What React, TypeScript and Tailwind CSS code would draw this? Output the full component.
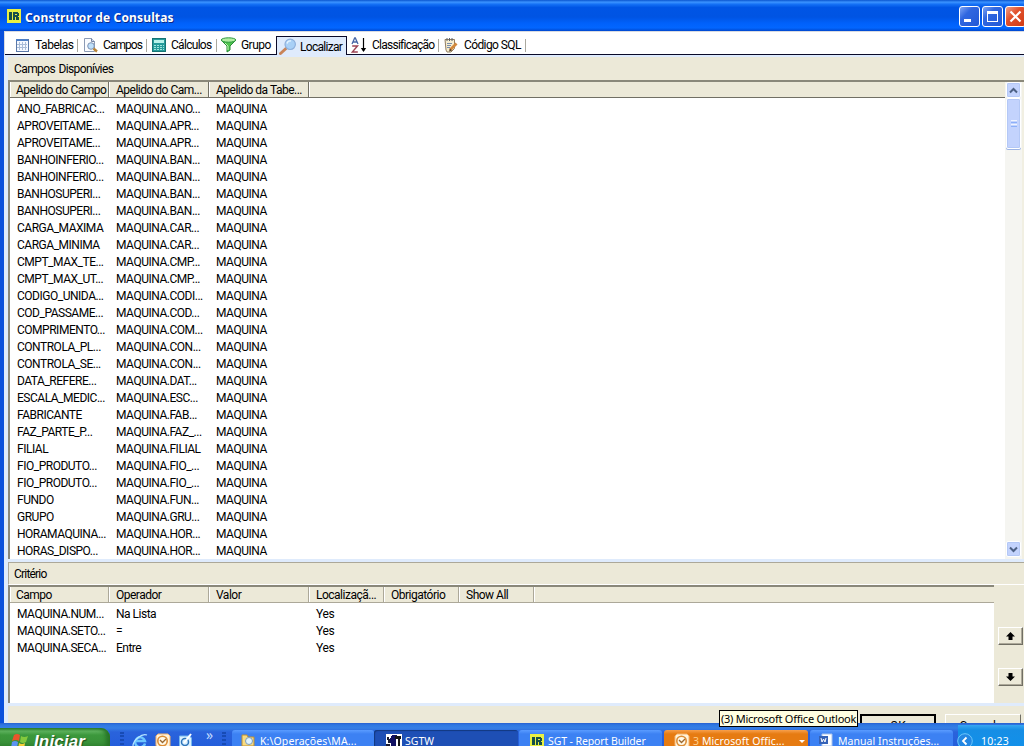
import React from "react";

type Column = { label: string; width: string };

type ToolbarItem = {
  label: string;
  icon: React.ReactNode;
  width: string;
  iconBox: string;
  text: string;
  active?: boolean;
  divider?: boolean;
};

const fields: [string, string][] = [
  ["ANO_FABRICAC...", "MAQUINA.ANO..."],
  ["APROVEITAME...", "MAQUINA.APR..."],
  ["APROVEITAME...", "MAQUINA.APR..."],
  ["BANHOINFERIO...", "MAQUINA.BAN..."],
  ["BANHOINFERIO...", "MAQUINA.BAN..."],
  ["BANHOSUPERI...", "MAQUINA.BAN..."],
  ["BANHOSUPERI...", "MAQUINA.BAN..."],
  ["CARGA_MAXIMA", "MAQUINA.CAR..."],
  ["CARGA_MINIMA", "MAQUINA.CAR..."],
  ["CMPT_MAX_TE...", "MAQUINA.CMP..."],
  ["CMPT_MAX_UT...", "MAQUINA.CMP..."],
  ["CODIGO_UNIDA...", "MAQUINA.CODI..."],
  ["COD_PASSAME...", "MAQUINA.COD..."],
  ["COMPRIMENTO...", "MAQUINA.COM..."],
  ["CONTROLA_PL...", "MAQUINA.CON..."],
  ["CONTROLA_SE...", "MAQUINA.CON..."],
  ["DATA_REFERE...", "MAQUINA.DAT..."],
  ["ESCALA_MEDIC...", "MAQUINA.ESC..."],
  ["FABRICANTE", "MAQUINA.FAB..."],
  ["FAZ_PARTE_P...", "MAQUINA.FAZ_..."],
  ["FILIAL", "MAQUINA.FILIAL"],
  ["FIO_PRODUTO...", "MAQUINA.FIO_..."],
  ["FIO_PRODUTO...", "MAQUINA.FIO_..."],
  ["FUNDO", "MAQUINA.FUN..."],
  ["GRUPO", "MAQUINA.GRU..."],
  ["HORAMAQUINA...", "MAQUINA.HOR..."],
  ["HORAS_DISPO...", "MAQUINA.HOR..."],
];

const criteria = [
  { campo: "MAQUINA.NUM...", operador: "Na Lista", localizacao: "Yes" },
  { campo: "MAQUINA.SETO...", operador: "=", localizacao: "Yes" },
  { campo: "MAQUINA.SECA...", operador: "Entre", localizacao: "Yes" },
];

const fieldColumns: Column[] = [
  { label: "Apelido do Campo", width: "w-[99px] pl-[6px]" },
  { label: "Apelido do Cam...", width: "w-[100px] pl-[7px]" },
  { label: "Apelido da Tabe...", width: "w-[100px] pl-[7px]" },
];

const criteriaColumns: Column[] = [
  { label: "Campo", width: "w-[99px] pl-[6px]" },
  { label: "Operador", width: "w-[100px] pl-[7px]" },
  { label: "Valor", width: "w-[100px] pl-[7px]" },
  { label: "Localizaçã...", width: "w-[75px] pl-[7px]" },
  { label: "Obrigatório", width: "w-[75px] pl-[7px]" },
  { label: "Show All", width: "w-[75px] pl-[7px]" },
];

const TableIcon = () => (
  <svg width="14" height="14" viewBox="0 0 14 14" shapeRendering="crispEdges">
    <rect x="1" y="1" width="12" height="12" fill="#f4f8ff" stroke="#5a78a8" />
    <rect x="1" y="1" width="12" height="2" fill="#4f7fc4" />
    <path d="M2 6.5h10M2 9.5h10M4.5 4v8M7.5 4v8M10.5 4v8" stroke="#a9bcd8" fill="none" />
  </svg>
);

const PageIcon = () => (
  <svg width="16" height="16" viewBox="0 0 16 16">
    <path d="M1.5 1.5h7l3 3v10h-10z" fill="#fafcff" stroke="#8c9bb5" />
    <path d="M8.5 1.5v3h3" fill="#cfdcf0" stroke="#7484a4" />
    <circle cx="8" cy="9" r="3.3" fill="#bfe0fa" stroke="#7d92b4" />
    <path d="M10.5 11.5l3.5 3" stroke="#b98538" strokeWidth="2.4" />
  </svg>
);

const CalcIcon = () => (
  <svg width="14" height="14" viewBox="0 0 14 14" shapeRendering="crispEdges">
    <rect x="0.5" y="0.5" width="13" height="13" fill="#259b9b" stroke="#167474" />
    <rect x="2" y="2" width="10" height="3" fill="#b8f2ea" />
    <path d="M2 7.5h10M2 9.5h10M2 11.5h10" stroke="#9fe6de" strokeDasharray="2 1" />
  </svg>
);

const FunnelIcon = () => (
  <svg width="17" height="16" viewBox="0 0 17 16">
    <path d="M1 3l6 6v6l3-2V9l6-6z" fill="#4ec54e" stroke="#278c35" />
    <ellipse cx="8.5" cy="3" rx="7.3" ry="2.2" fill="#b2efa2" stroke="#2c9640" />
    <path d="M5 6l3 3v4" stroke="#c4f5b5" fill="none" />
  </svg>
);

const LensIcon = () => (
  <svg width="18" height="18" viewBox="0 0 18 18">
    <path d="M1.5 15.5l5.5-5" stroke="#c98458" strokeWidth="3" strokeLinecap="round" />
    <circle cx="11.2" cy="6.3" r="5.2" fill="#a9d0f6" stroke="#8fb0dc" strokeWidth="1.2" />
    <path d="M8 5.5a3.5 3.5 0 0 1 4-2.5" stroke="#e6f5ff" strokeWidth="1.4" fill="none" />
  </svg>
);

const SortIcon = () => (
  <svg width="16" height="16" viewBox="0 0 16 16">
    <path d="M1 7l2.7-6h.6L7 7M2 5h4" fill="none" stroke="#4666a6" strokeWidth="1.3" />
    <path d="M1.2 9h5.3L1.3 15h5.5" fill="none" stroke="#9d4454" strokeWidth="1.4" />
    <path d="M12.5 1v13" stroke="#000" strokeWidth="1.2" />
    <path d="M9.8 11h5.4l-2.7 4z" fill="#000" />
  </svg>
);

const ScriptIcon = () => (
  <svg width="15" height="16" viewBox="0 0 15 16">
    <path d="M1 2.5h9.5v9L7 15H3l-1-2z" fill="#f6edcf" stroke="#927e62" />
    <path d="M3 1v3M5.5 1v3M8 1v3" stroke="#59606c" />
    <path d="M3 6.5h5M3 8.5h4M3 10.5h3" stroke="#788cad" />
    <path d="M6 13l6.5-6.5" stroke="#d2873b" strokeWidth="2.8" />
    <path d="M5 14.5l1-3 2 2z" fill="#50402b" />
  </svg>
);

const ReportIcon = () => (
  <svg width="14" height="14" viewBox="0 0 14 14" shapeRendering="crispEdges">
    <rect width="14" height="14" fill="#e9f043" />
    <path d="M2 3h3v8H2zM6 3h5v1h1v3h-1v1h1v3H9V8H8v3H6z" fill="#164f4a" />
    <path d="M8 5h2v1H8z" fill="#e9f043" />
  </svg>
);

const OutlookIcon = () => (
  <svg width="16" height="16" viewBox="0 0 16 16">
    <path d="M3 1h10l2 2v10l-3 2H2l-1-3V3z" fill="#fff3db" stroke="#f6b46d" />
    <circle cx="7.5" cy="8" r="4.7" fill="#fff9e8" stroke="#dc8c35" strokeWidth="1.6" />
    <path d="M5 7l2.5 2.5L11 6" stroke="#9b672f" strokeWidth="1.3" fill="none" />
  </svg>
);

const toolbar: ToolbarItem[] = [
  { label: "Tabelas", icon: <TableIcon />, width: "w-[72px]", iconBox: "w-[29px] pl-[9px]", text: "tracking-[-0.45px]", divider: true },
  { label: "Campos", icon: <PageIcon />, width: "w-[69px]", iconBox: "w-[25px] pl-[5px]", text: "tracking-[-0.95px]", divider: true },
  { label: "Cálculos", icon: <CalcIcon />, width: "w-[70px]", iconBox: "w-[24px] pl-[5px]", text: "tracking-[-0.7px]", divider: true },
  { label: "Grupo", icon: <FunnelIcon />, width: "w-[59px]", iconBox: "w-[24px] pl-[3px]", text: "tracking-[-0.55px]" },
  { label: "Localizar", icon: <LensIcon />, width: "w-[71px]", iconBox: "w-[23px] pl-[2px]", text: "tracking-[-0.7px]", active: true },
  { label: "Classificação", icon: <SortIcon />, width: "w-[92px]", iconBox: "w-[25px] pl-[4px]", text: "tracking-[-0.75px]", divider: true },
  { label: "Código SQL", icon: <ScriptIcon />, width: "w-[87px]", iconBox: "w-[25px] pl-[5px]", text: "tracking-[-0.6px]", divider: true },
];

const ListHeader: React.FC<{ columns: Column[]; soft?: boolean }> = ({ columns, soft }) => (
  <div className="flex h-[16px] w-full shrink-0 bg-[#ece9d8]">
    {columns.map((col) => (
      <div
        key={col.label}
        className={`${col.width} ${
          soft ? "border-[#aca899]" : "border-[#716f64]"
        } shrink-0 whitespace-nowrap border-b border-r leading-[17px] tracking-[-0.5px] shadow-[inset_1px_0_0_#fff]`}
      >
        {col.label}
      </div>
    ))}
    <div className={`${soft ? "border-[#aca899]" : "border-[#716f64]"} flex-1 border-b shadow-[inset_1px_0_0_#fff]`} />
  </div>
);

const ScrollButton: React.FC<{ down?: boolean }> = ({ down }) => (
  <div className="flex h-[16px] w-[15px] shrink-0 items-center justify-center rounded-[2px] border border-white bg-[#c3d3fd] shadow-[inset_0_0_0_1px_#b4c8f6]">
    <svg width="9" height="7" viewBox="0 0 9 7">
      <path d={down ? "M1 1.5l3.5 3.5L8 1.5" : "M1 5.5L4.5 2 8 5.5"} fill="none" stroke="#4d6185" strokeWidth="2" />
    </svg>
  </div>
);

const MoveButton: React.FC<{ down?: boolean }> = ({ down }) => (
  <div className="flex h-[18px] w-[25px] items-center justify-center border border-b-[#716f64] border-l-white border-r-[#716f64] border-t-white bg-[#ece9d8] shadow-[inset_-1px_-1px_0_#aca899]">
    <svg width="9" height="8" viewBox="0 0 9 8" className={down ? "rotate-180" : ""}>
      <path d="M4.5 0L9 4.5H6.5V8h-4V4.5H0z" fill="#000" />
    </svg>
  </div>
);

const TitleBar = () => (
  <div className="flex h-[31px] shrink-0 items-center bg-[linear-gradient(180deg,#0a55cf_0%,#3b93ff_7%,#1470f5_14%,#0055e5_24%,#0054e3_55%,#0061fb_75%,#0266ff_90%,#0048cf_100%)] pl-[7px] pt-[3px]">
    <span className="-mt-[2px]">
      <ReportIcon />
    </span>
    <span className="ml-[4px] flex-1 font-['Noto_Sans',sans-serif] text-[12px] font-bold tracking-[0.15px] text-white [text-shadow:1px_1px_0_#0a2a88]">
      Construtor de Consultas
    </span>
    <div className="-mt-px flex w-[65px] shrink-0 gap-[2px]">
      <div className="h-[21px] w-[21px] shrink-0 rounded-[3px] border border-white bg-[linear-gradient(135deg,#7fa5f4,#3067e0_35%,#2158d6)] pl-[4px] pt-[12px]">
        <div className="h-[3px] w-[7px] bg-white" />
      </div>
      <div className="h-[21px] w-[21px] shrink-0 rounded-[3px] border border-white bg-[linear-gradient(135deg,#7fa5f4,#3067e0_35%,#2158d6)] p-[4px]">
        <div className="h-[11px] w-[11px] border border-t-[3px] border-white" />
      </div>
      <div className="flex h-[21px] w-[21px] shrink-0 items-center justify-center rounded-[3px] border border-white bg-[linear-gradient(135deg,#f0a088,#e2512c_40%,#cf3b14)]">
        <svg width="13" height="13" viewBox="0 0 13 13">
          <path d="M1.5 1.5l10 10M11.5 1.5l-10 10" stroke="#fff" strokeWidth="2.2" />
        </svg>
      </div>
    </div>
  </div>
);

const Toolbar = () => (
  <div className="flex h-[24px] shrink-0 border-l border-t border-[#d9dbe0] bg-white">
    <div className="w-px shrink-0 border-b border-[#0a0a28]" />
    {toolbar.map((item) => (
      <div
        key={item.label}
        className={`${item.width} flex shrink-0 pt-[4px] ${item.active ? "" : "border-b border-[#0a0a28]"}`}
      >
        <div
          className={`flex flex-1 items-center whitespace-nowrap ${
            item.active ? "-mb-px border border-b-0 border-[#0a0a28] bg-[#dfebfc]" : ""
          }`}
        >
          <span className={`${item.iconBox} shrink-0`}>{item.icon}</span>
          <span className={`${item.text} pt-px`}>{item.label}</span>
        </div>
        {item.divider && <div className="mt-[3px] h-[13px] w-px bg-[#aaa99f]" />}
      </div>
    ))}
    <div className="flex-1 border-b border-[#0a0a28]" />
  </div>
);

const FieldList = () => (
  <div className="flex h-[479px] shrink-0 border-l-2 border-t-2 border-[#8a887a] bg-white">
    <div className="min-w-0 flex-1">
      <ListHeader columns={fieldColumns} />
      <div className="pt-[3px] tracking-[-0.48px]">
        {fields.map(([name, alias], idx) => (
          <div key={idx} className="flex h-[17px] items-center whitespace-nowrap">
            <span className="w-[106px] shrink-0 pl-[7px]">{name}</span>
            <span className="w-[100px] shrink-0">{alias}</span>
            <span>MAQUINA</span>
          </div>
        ))}
      </div>
    </div>
    <div className="flex w-[19px] shrink-0 flex-col border-r-2 border-[#f1efe2] bg-[#f5f5f1] pl-px">
      <ScrollButton />
      <div className="flex h-[51px] w-[15px] flex-col items-center justify-center gap-px rounded-[2px] border border-white bg-[#c3d3fd] shadow-[inset_0_0_0_1px_#b4c8f6,0_1px_0_#9db4e4]">
        <div className="h-px w-[6px] bg-[#eef4fe]" />
        <div className="h-px w-[6px] bg-[#8cb0f8]" />
        <div className="h-px w-[6px] bg-[#eef4fe]" />
        <div className="h-px w-[6px] bg-[#8cb0f8]" />
      </div>
      <div className="flex-1" />
      <ScrollButton down />
      <div className="h-[2px]" />
    </div>
  </div>
);

const CriteriaPanel = () => (
  <div className="flex h-[118px] shrink-0 bg-[#ece9d8]">
    <div className="w-[986px] border-l-2 border-t-2 border-[#8a887a] bg-white">
      <ListHeader columns={criteriaColumns} soft />
      <div className="pt-[3px]">
        {criteria.map((row) => (
          <div key={row.campo} className="flex h-[17px] items-center whitespace-nowrap tracking-[-0.3px]">
            <span className="w-[106px] shrink-0 pl-[7px] tracking-[-0.48px]">{row.campo}</span>
            <span className="w-[200px] shrink-0 tracking-[-0.5px]">{row.operador}</span>
            <span>{row.localizacao}</span>
          </div>
        ))}
      </div>
    </div>
    <div className="flex w-[30px] flex-col items-end gap-[23px] pr-px pt-[42px]">
      <MoveButton />
      <MoveButton down />
    </div>
  </div>
);

const task =
  "flex h-[16px] shrink-0 items-start whitespace-nowrap rounded-t-[3px] pt-[3px] text-white";

const Taskbar = () => (
  <div className="flex h-[23px] shrink-0 items-end overflow-hidden bg-[linear-gradient(180deg,#2860d0_0,#2f78e2_2px,#367fe5_5px,#2a63dc_9px,#245edb_23px)] font-['Noto_Sans',sans-serif] text-[10.5px] leading-[17px]">
    <div className="flex h-[18px] w-[110px] shrink-0 items-start rounded-tr-[9px] bg-[linear-gradient(180deg,#2c7f2c,#5fb35f_3px,#3c983c_7px,#388f38)] pl-[11px] pt-[5px] shadow-[inset_-4px_0_4px_#267326]">
      <svg width="19" height="18" viewBox="0 0 19 18" className="shrink-0">
        <path d="M3 2q3-2 6 0L8 8Q5 6 1 8z" fill="#e9552b" />
        <path d="M10 3q3 2 7 0l-2 6q-3 2-6 0z" fill="#83c93d" />
        <path d="M1 9q3-2 6 0l-1 6q-3-2-6 0z" fill="#5c93f2" />
        <path d="M8 10q3 2 6 0l-1 6q-3 2-6 0z" fill="#f8cf38" />
      </svg>
      <span className="ml-[4px] font-['Liberation_Sans',sans-serif] text-[17px] font-bold italic leading-[18px] tracking-[0.15px] text-white [text-shadow:1px_1px_1px_#1d4d1d]">
        Iniciar
      </span>
    </div>
    <div className="flex h-[16px] w-[122px] shrink-0 items-start pl-[10px]">
      <div className="mt-[2px] h-[16px] w-[4px] border-x-2 border-dotted border-[#174bb5]" />
      <svg width="16" height="16" viewBox="0 0 16 16" className="ml-[8px] mt-[3px]">
        <path d="M13 10.5A5 5 0 1 1 13 8H4" fill="none" stroke="#6dc6ff" strokeWidth="2.4" />
        <path d="M1 13C1 7 10 0 15 2" fill="none" stroke="#b6e5ff" strokeWidth="1.2" />
      </svg>
      <div className="ml-[7px] mt-[3px]">
        <OutlookIcon />
      </div>
      <svg width="15" height="16" viewBox="0 0 15 16" className="ml-[7px] mt-[3px]">
        <path d="M1.5 3h10l2 2v10h-12z" fill="#d9f0ff" stroke="#77b8ed" />
        <circle cx="7" cy="9" r="3.5" fill="none" stroke="#2d73ba" strokeWidth="1.5" />
        <path d="M6 10l7-9" stroke="#fff" strokeWidth="2" />
      </svg>
      <span className="ml-[13px] mt-[-3px] text-[14px] leading-[16px] text-[#c2dcff]">»</span>
      <div className="ml-[9px] mt-[2px] h-[16px] w-[4px] border-x-2 border-dotted border-[#174bb5]" />
    </div>
    <div className={`${task} w-[142px] bg-[linear-gradient(180deg,#5a9cff,#3c81f3_4px)] pl-[9px]`}>
      <svg width="15" height="15" viewBox="0 0 15 15" className="shrink-0">
        <path d="M1 2h5l1 2h6v9H1z" fill="#f8dc83" stroke="#bb8f37" />
        <circle cx="8" cy="8" r="3.5" fill="#e0f4ff" stroke="#7d9bbb" />
      </svg>
      <span className="ml-[4px] tracking-[0.1px]">K:\Operações\MA...</span>
    </div>
    <div className={`${task} w-[144px] bg-[#1e4fb5] pl-[12px] shadow-[inset_1px_1px_1px_#123880]`}>
      <svg width="16" height="15" viewBox="0 0 16 15" className="mt-px shrink-0">
        <path d="M0 0h16v15H0z" fill="#fff" />
        <path d="M6 1h5v1h-1v13H5V9H4V4h1V2h1z" fill="#111162" />
        <path d="M9 2h6v3h-1v10h-2V5H9z" fill="#151515" />
        <path d="M1 3h2v2h1v4H2V6H1zM0 10h4v3H0z" fill="#1b1b30" />
      </svg>
      <span className="ml-[3px]">SGTW</span>
    </div>
    <div className={`${task} ml-px w-[143px] bg-[linear-gradient(180deg,#5a9cff,#3c81f3_4px)] pl-[11px]`}>
      <span className="mt-px w-[18px] shrink-0">
        <ReportIcon />
      </span>
      <span className="tracking-[-0.1px]">SGT - Report Builder</span>
    </div>
    <div className={`${task} ml-[2px] w-[144px] bg-[linear-gradient(180deg,#f8a04c,#e67b12_4px)] pl-[10px]`}>
      <OutlookIcon />
      <span className="ml-[3px] flex-1 tracking-[0.1px]">
        <span className="text-[#ffd08d]">3</span> Microsoft Offic...
      </span>
      <svg width="6" height="4" className="mr-[3px] mt-[7px]" viewBox="0 0 6 4">
        <path d="M0 0h6L3 3z" fill="#fff" />
      </svg>
    </div>
    <div className={`${task} ml-[2px] w-[143px] bg-[linear-gradient(180deg,#5a9cff,#3c81f3_4px)] pl-[9px]`}>
      <svg width="14" height="14" viewBox="0 0 14 14" className="shrink-0">
        <path d="M3 1h10v12H3z" fill="#fff" stroke="#aac4eb" />
        <path d="M0 3h9v8H0z" fill="#3562b7" />
        <path d="M2 5l1 4 1.5-3L6 9l1-4" fill="none" stroke="#fff" />
      </svg>
      <span className="ml-[5px] tracking-[0.05px]">Manual Instruções...</span>
    </div>
    <div className="ml-[5px] flex h-[21px] flex-1 items-start bg-[linear-gradient(180deg,#38a7f1,#168ee5_5px,#1290e9)] pt-[8px] text-white">
      <svg width="16" height="16" viewBox="0 0 16 16" className="-ml-px shrink-0">
        <circle cx="8" cy="8" r="7.3" fill="#2387e3" stroke="#6cc7fc" />
        <path d="M9.5 4.5L6 8l3.5 3.5" fill="none" stroke="#fff" strokeWidth="1.8" />
      </svg>
      <span className="ml-[8px] tracking-[0.2px]">10:23</span>
    </div>
  </div>
);

const App: React.FC = () => {
  return (
    <div className="relative flex h-[746px] w-[1024px] flex-col overflow-hidden bg-[#ece9d8] font-[Roboto,sans-serif] text-[12px] leading-[17px] text-black">
      <TitleBar />
      <div className="flex h-[692px] shrink-0 flex-col border-l-4 border-[#0a50dc]">
        <Toolbar />
        <div className="flex flex-1 flex-col border-l-4 border-t-2 border-[#dfebfc]">
          <div className="h-[23px] shrink-0 pl-[6px] pt-[4px] tracking-[-0.7px] [word-spacing:1px]">
            <span className="tracking-[-0.6px]">Campos Disponívies</span>
          </div>
          <FieldList />
          <div className="h-[4px] shrink-0 border-b border-[#aca899] bg-[#dfebfc]" />
          <div className="h-[22px] shrink-0 border-b border-l border-b-white border-l-[#aca899] pl-[5px] pt-[3px] tracking-[-0.8px]">
            Critério
          </div>
          <CriteriaPanel />
          <div className="h-[3px] shrink-0 bg-[#dfebfc]" />
          <div className="flex h-[17px] shrink-0 justify-end gap-[9px] overflow-hidden pr-[3px] pt-[8px]">
            <div className="h-[24px] w-[76px] border-2 border-black pt-[2px] text-center leading-[17px]">OK</div>
            <div className="h-[24px] w-[76px] border border-l-white border-r-[#716f64] border-t-white pt-[3px] text-center leading-[17px]">
              Cancelar
            </div>
          </div>
        </div>
      </div>
      <Taskbar />
      <div className="absolute left-[719px] top-[710px] h-[17px] w-[139px] whitespace-nowrap border border-black bg-[#ffffe1] pl-px font-['Noto_Sans',sans-serif] text-[11px] leading-[16px] tracking-[-0.25px]">
        (3) Microsoft Office Outlook
      </div>
    </div>
  );
};

export default App;
